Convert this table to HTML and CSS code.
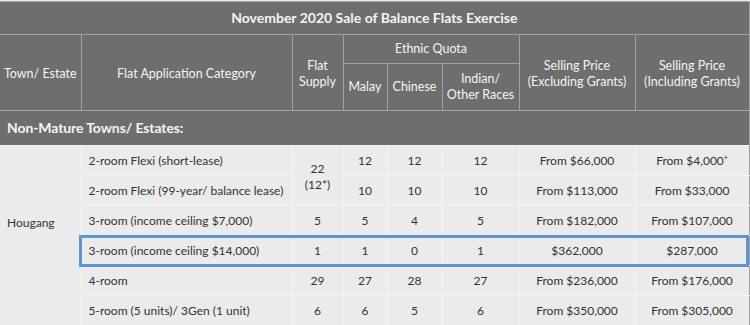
FILE: index.html
```html
<!DOCTYPE html>
<html>
<head>
<meta charset="utf-8">
<link rel="stylesheet" href="styles.css">
</head>
<body>
<div class="wrap">
<table class="flats">
  <colgroup>
    <col class="c-town"><col class="c-cat"><col class="c-sup"><col class="c-malay"><col class="c-chi"><col class="c-ind"><col class="c-ex"><col class="c-in">
  </colgroup>
  <thead>
    <tr class="r-title"><th colspan="8" class="title">November 2020 Sale of Balance Flats Exercise</th></tr>
    <tr class="r-h1">
      <th rowspan="2">Town/ Estate</th>
      <th rowspan="2">Flat Application Category</th>
      <th rowspan="2">Flat<br>Supply</th>
      <th colspan="3">Ethnic Quota</th>
      <th rowspan="2">Selling Price<br>(Excluding Grants)</th>
      <th rowspan="2">Selling Price<br>(Including Grants)</th>
    </tr>
    <tr class="r-h2">
      <th>Malay</th><th>Chinese</th><th>Indian/<br>Other Races</th>
    </tr>
    <tr class="r-sec"><th colspan="8" class="sec">Non-Mature Towns/ Estates:</th></tr>
  </thead>
  <tbody>
    <tr>
      <td rowspan="6" class="town">Hougang</td>
      <td class="cat">2-room Flexi (short-lease)</td>
      <td rowspan="2" class="sup">22<br>(12*)</td>
      <td>12</td><td>12</td><td>12</td>
      <td>From $66,000</td><td>From $4,000<sup>+</sup></td>
    </tr>
    <tr>
      <td class="cat">2-room Flexi (99-year/ balance lease)</td>
      <td>10</td><td>10</td><td>10</td>
      <td>From $113,000</td><td>From $33,000</td>
    </tr>
    <tr>
      <td class="cat">3-room (income ceiling $7,000)</td>
      <td>5</td><td>5</td><td>4</td><td>5</td>
      <td>From $182,000</td><td>From $107,000</td>
    </tr>
    <tr>
      <td class="cat">3-room (income ceiling $14,000)</td>
      <td>1</td><td>1</td><td>0</td><td>1</td>
      <td>$362,000</td><td>$287,000</td>
    </tr>
    <tr>
      <td class="cat">4-room</td>
      <td>29</td><td>27</td><td>28</td><td>27</td>
      <td>From $236,000</td><td>From $176,000</td>
    </tr>
    <tr>
      <td class="cat">5-room (5 units)/ 3Gen (1 unit)</td>
      <td>6</td><td>6</td><td>5</td><td>6</td>
      <td>From $350,000</td><td>From $305,000</td>
    </tr>
  </tbody>
</table>
<div class="highlight"></div>
</div>
</body>
</html>
```

FILE: styles.css
```css
html, body {
  margin: 0;
  padding: 0;
  background: #ebebeb;
}
.wrap {
  position: relative;
  width: 750px;
  height: 325px;
  overflow: hidden;
  font-family: Lato, "Open Sans", sans-serif;
}
.flats {
  border-collapse: collapse;
  table-layout: fixed;
  width: 749px;
  margin-top: 1px;
}
.c-town { width: 81px; }
.c-cat { width: 211px; }
.c-sup { width: 51px; }
.c-malay { width: 44px; }
.c-chi { width: 55px; }
.c-ind { width: 77px; }
.c-ex { width: 116px; }
.c-in { width: 114px; }

.flats th {
  background: #6e6e6e;
  color: #f4f4f4;
  font-weight: 400;
  font-size: 12.5px;
  line-height: 16px;
  border: 1px solid #a3a3a3;
  padding: 0 2px;
  text-align: center;
  white-space: nowrap;
}
.flats th:first-child { border-left: none; }
.r-title th {
  height: 32px;
  font-size: 14px;
  font-weight: 700;
}
.r-h1 th { height: 28px; }
.r-h2 th { height: 46px; }
.r-h1 th[rowspan] { padding-top: 2px; }
.flats th.sec {
  height: 34px;
  text-align: left;
  padding-left: 7px;
  font-size: 14px;
  font-weight: 700;
  letter-spacing: -0.1px;
  border-bottom: none;
}
.flats td {
  background: #ebebeb;
  color: #333;
  font-size: 12px;
  line-height: 16px;
  height: 29px;
  padding: 0 2px;
  text-align: center;
  white-space: nowrap;
  border: 1px solid #f4f4f4;
}
.flats td:last-child { border-right-color: #a3a3a3; }
.flats td.town {
  text-align: left;
  padding-left: 7px;
  padding-bottom: 26px;
  border-left: none;
}
.flats td.cat {
  text-align: left;
  padding-left: 7px;
}
.flats td.sup { padding-top: 2px; }
sup {
  font-size: 7px;
  line-height: 0;
  vertical-align: 5px;
}
.highlight {
  position: absolute;
  left: 79px;
  top: 235px;
  width: 664px;
  height: 26px;
  border: 3px solid #5e97d0;
  pointer-events: none;
}
```
